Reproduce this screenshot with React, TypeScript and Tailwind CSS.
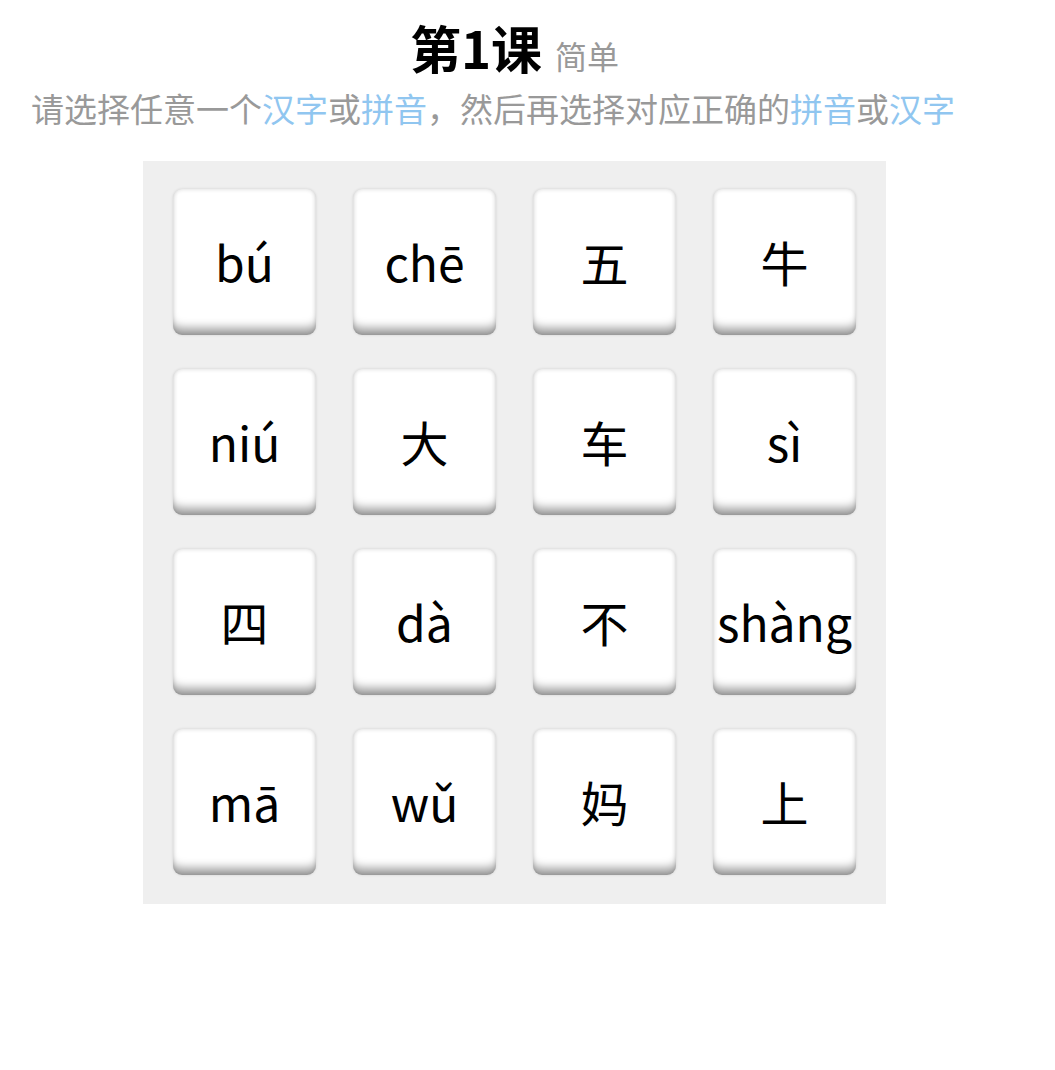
import React from 'react';

const TILES = ['bú', 'chē', '五', '牛', 'niú', '大', '车', 'sì', '四', 'dà', '不', 'shàng', 'mā', 'wǔ', '妈', '上'];

const Tile: React.FC<{ label: string }> = ({ label }) => (
  <button className="w-[143px] h-[146px] rounded-[9px] bg-white flex items-center justify-center text-[48px] leading-none text-black shadow-[inset_0_-12px_10px_-5px_rgba(0,0,0,0.38),inset_0_0_4px_rgba(0,0,0,0.16),0_0_3px_rgba(0,0,0,0.12)] whitespace-nowrap">
    <span className="-mt-[2px]">{label}</span>
  </button>
);

export default function App() {
  return (
    <div className="w-[1029px] min-h-[1070px] bg-white flex flex-col items-center" style={{ fontFamily: '"Noto Sans CJK SC", "Noto Sans", sans-serif' }}>
      <header className="w-full pt-[20px] flex flex-col items-center">
        <h1 className="flex items-baseline gap-[13px] leading-[54px]">
          <span className="text-[51px] font-bold text-black">第1课</span>
          <span className="text-[32px] text-[#999]">简单</span>
        </h1>
        <p className="self-start pl-[31px] text-[33px] leading-[52px] text-[#999] whitespace-nowrap">
          请选择任意一个<span className="text-[#90c6f0]">汉字</span>或<span className="text-[#90c6f0]">拼音</span>，然后再选择对应正确的<span className="text-[#90c6f0]">拼音</span>或<span className="text-[#90c6f0]">汉字</span>
        </p>
      </header>

      <main className="mt-[27px] w-[743px] h-[743px] bg-[#efefef] px-[30px] pt-[28px] grid grid-cols-4 gap-x-[37px] gap-y-[34px] content-start">
        {TILES.map((t, i) => (
          <Tile key={i} label={t} />
        ))}
      </main>
    </div>
  );
}
